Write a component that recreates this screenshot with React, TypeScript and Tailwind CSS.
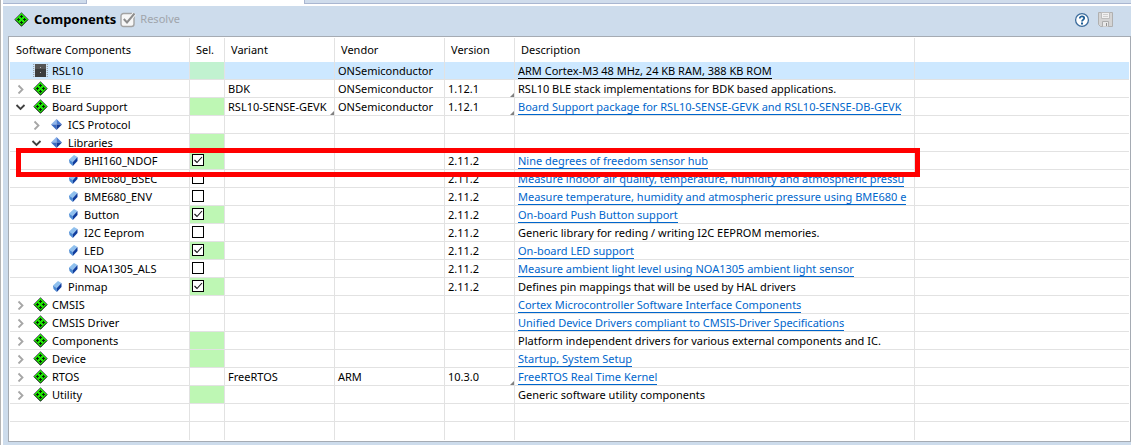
import { useState } from "react";
import type { ReactNode } from "react";

type Kind = "chip" | "pack" | "group" | "leaf";

interface Row {
  name: string;
  kind: Kind;
  level: 0 | 1 | 2;
  expand?: "open" | "closed";
  green?: boolean;
  checked?: boolean;
  variant?: string;
  vendor?: string;
  version?: string;
  moreVariants?: boolean;
  moreVersions?: boolean;
  text?: string;
  link?: boolean;
  selected?: boolean;
}

const rows: Row[] = [
  { name: "RSL10", kind: "chip", level: 0, green: true, vendor: "ONSemiconductor", text: "ARM Cortex-M3 48 MHz, 24 KB RAM, 388 KB ROM", link: true, selected: true },
  { name: "BLE", kind: "pack", level: 0, expand: "closed", variant: "BDK", vendor: "ONSemiconductor", version: "1.12.1", moreVersions: true, text: "RSL10 BLE stack implementations for BDK based applications." },
  { name: "Board Support", kind: "pack", level: 0, expand: "open", green: true, variant: "RSL10-SENSE-GEVK", moreVariants: true, vendor: "ONSemiconductor", version: "1.12.1", moreVersions: true, text: "Board Support package for RSL10-SENSE-GEVK and RSL10-SENSE-DB-GEVK", link: true },
  { name: "ICS Protocol", kind: "group", level: 1, expand: "closed" },
  { name: "Libraries", kind: "group", level: 1, expand: "open", green: true },
  { name: "BHI160_NDOF", kind: "leaf", level: 2, green: true, checked: true, version: "2.11.2", text: "Nine degrees of freedom sensor hub", link: true },
  { name: "BME680_BSEC", kind: "leaf", level: 2, checked: false, version: "2.11.2", text: "Measure indoor air quality, temperature, humidity and atmospheric pressu", link: true },
  { name: "BME680_ENV", kind: "leaf", level: 2, checked: false, version: "2.11.2", text: "Measure temperature, humidity and atmospheric pressure using BME680 e", link: true },
  { name: "Button", kind: "leaf", level: 2, green: true, checked: true, version: "2.11.2", text: "On-board Push Button support", link: true },
  { name: "I2C Eeprom", kind: "leaf", level: 2, checked: false, version: "2.11.2", text: "Generic library for reding / writing I2C EEPROM memories." },
  { name: "LED", kind: "leaf", level: 2, green: true, checked: true, version: "2.11.2", text: "On-board LED support", link: true },
  { name: "NOA1305_ALS", kind: "leaf", level: 2, checked: false, version: "2.11.2", text: "Measure ambient light level using NOA1305 ambient light sensor", link: true },
  { name: "Pinmap", kind: "leaf", level: 1, green: true, checked: true, version: "2.11.2", text: "Defines pin mappings that will be used by HAL drivers" },
  { name: "CMSIS", kind: "pack", level: 0, expand: "closed", text: "Cortex Microcontroller Software Interface Components", link: true },
  { name: "CMSIS Driver", kind: "pack", level: 0, expand: "closed", text: "Unified Device Drivers compliant to CMSIS-Driver Specifications", link: true },
  { name: "Components", kind: "pack", level: 0, expand: "closed", green: true, text: "Platform independent drivers for various external components and IC." },
  { name: "Device", kind: "pack", level: 0, expand: "closed", green: true, text: "Startup, System Setup", link: true },
  { name: "RTOS", kind: "pack", level: 0, expand: "closed", variant: "FreeRTOS", vendor: "ARM", version: "10.3.0", moreVersions: true, text: "FreeRTOS Real Time Kernel", link: true },
  { name: "Utility", kind: "pack", level: 0, expand: "closed", green: true, text: "Generic software utility components" },
];

function PackIcon() {
  return (
    <svg width="15" height="15" viewBox="0 0 15 15" className="shrink-0" aria-hidden="true">
      <path d="M7.5 0.6 14.4 7.5 7.5 14.4 0.6 7.5Z" fill="#1fe600" stroke="#6f6280" strokeWidth="1" />
      <path d="M1.5 8 7.5 14 13.5 8" fill="none" stroke="#1b4a16" strokeWidth="1" />
      <path
        d="M7 3h1v1h1v1H8v1H7V5H6V4h1zM4 6h1v1h1v1H5v1H4V8H3V7h1zM10 6h1v1h1v1h-1v1h-1V8H9V7h1zM7 9h1v1h1v1H8v1H7v-1H6v-1h1z"
        fill="#06240a"
      />
    </svg>
  );
}

function ChipIcon() {
  return (
    <svg width="15" height="15" viewBox="0 0 15 15" className="shrink-0" aria-hidden="true">
      <path d="M0.5 1v13M14.5 1v13" stroke="#9aa3ab" strokeDasharray="1 1" />
      <path d="M1.5 1v13M13.5 1v13" stroke="#c9d3da" strokeDasharray="1 1" />
      <rect x="2" y="1" width="11" height="13" fill="#3c3c3c" />
      <rect x="2" y="1" width="11" height="5" fill="#555" />
      <path d="M7 4h1v1H7zM7 9h1v1H7z" fill="#b5b5b5" />
    </svg>
  );
}

function GroupIcon() {
  return (
    <svg width="11" height="11" viewBox="0 0 11 11" className="shrink-0" aria-hidden="true">
      <path d="M5.5 0 0 5.5h5.5z" fill="#8fb5ea" />
      <path d="M5.5 0 11 5.5H5.5z" fill="#4a7bd0" />
      <path d="M0 5.5 5.5 11V5.5z" fill="#3a6ac2" />
      <path d="M11 5.5 5.5 11V5.5z" fill="#143c96" />
    </svg>
  );
}

function LeafIcon() {
  return (
    <svg width="9" height="11" viewBox="0 0 9 11" className="shrink-0" aria-hidden="true">
      <path d="M5 0 0 4.5 3.5 7 8.5 2z" fill="#8fc0ee" />
      <path d="M0 4.5 3.8 7V11L0.5 8z" fill="#4a8ad4" />
      <path d="M3.8 7 8.5 2V6L3.8 11z" fill="#0f3d9e" />
    </svg>
  );
}

function Chevron({ open }: { open: boolean }) {
  return open ? (
    <svg width="11" height="10" viewBox="0 0 11 10" aria-hidden="true">
      <path d="M1.5 3 5.5 7 9.5 3" fill="none" stroke="#404040" strokeWidth="1.8" />
    </svg>
  ) : (
    <svg width="11" height="10" viewBox="0 0 11 10" aria-hidden="true">
      <path d="M3.5 1.5 7.5 5.5 3.5 9.5" fill="none" stroke="#a6a6a6" strokeWidth="1.8" />
    </svg>
  );
}

const icons: Record<Kind, ReactNode> = {
  chip: <ChipIcon />,
  pack: <PackIcon />,
  group: <GroupIcon />,
  leaf: <LeafIcon />,
};

const indents = ["pl-[5px]", "pl-[21px]", "pl-[37px]"];
const line = "border-r border-b border-[#e2e2e2]";

function More() {
  return (
    <svg width="4" height="4" viewBox="0 0 4 4" className="absolute right-0 bottom-0" aria-hidden="true">
      <path d="M4 0V4H0z" fill="#808080" />
    </svg>
  );
}

function Tick({ label, initial }: { label: string; initial: boolean }) {
  const [on, setOn] = useState(initial);
  return (
    <span className="mb-px ml-[2px] grid size-3 border border-black bg-white">
      <input
        type="checkbox"
        aria-label={label}
        checked={on}
        onChange={() => setOn(!on)}
        className="col-start-1 row-start-1 size-[10px] appearance-none"
      />
      {on && (
        <svg viewBox="0 0 10 10" className="pointer-events-none col-start-1 row-start-1 size-[10px]" aria-hidden="true">
          <path d="M1.5 5 4 7.5 9 2" fill="none" stroke="#111" strokeWidth="1.1" />
        </svg>
      )}
    </span>
  );
}

function ComponentRow({ row }: { row: Row }) {
  const iconBox = row.kind === "leaf" ? "w-[17px]" : "w-[15px]";
  const gap = row.kind === "leaf" ? "ml-[2px]" : "ml-1";
  return (
    <tr className={row.selected ? "h-[18px] bg-[#cde8ff]" : "h-[18px]"}>
      <td className={`${line} p-0`}>
        <div className={`flex h-[17px] items-center ${indents[row.level]}`}>
          <span className="mt-px w-[18px]">
            {row.expand && (
              <button type="button" aria-label={`Toggle ${row.name}`} className="block">
                <Chevron open={row.expand === "open"} />
              </button>
            )}
          </span>
          <span className={`flex shrink-0 justify-center ${iconBox}`}>{icons[row.kind]}</span>
          <span className={gap}>{row.name}</span>
        </div>
      </td>
      <td className={`${line} p-0 ${row.green ? (row.selected ? "bg-[#c1f2d0]" : "bg-[#bef7b4]") : ""}`}>
        {row.checked !== undefined && <Tick label={row.name} initial={row.checked} />}
      </td>
      <td className={`${line} relative py-0 pr-0 pl-[3px]`}>
        {row.variant}
        {row.moreVariants && <More />}
      </td>
      <td className={`${line} py-0 pr-0 pl-[3px]`}>{row.vendor}</td>
      <td className={`${line} relative py-0 pr-0 pl-[3px]`}>
        {row.version}
        {row.moreVersions && <More />}
      </td>
      <td className={`${line} py-0 pr-0 pl-[3px]`}>
        {row.link ? (
          <a
            href="#"
            className={`block h-4 w-fit border-b leading-[15px] ${row.selected ? "border-black text-black" : "border-[#0066cc] text-[#0066cc]"}`}
          >
            {row.text}
          </a>
        ) : (
          row.text
        )}
      </td>
      <td className="border-b border-[#e2e2e2] p-0" />
    </tr>
  );
}

export default function App() {
  const heads = ["Sel.", "Variant", "Vendor", "Version", "Description"];
  return (
    <div className="flex h-screen min-h-[445px] flex-col overflow-hidden border-l border-[#b4b4b4] bg-white font-['Noto_Sans',sans-serif] text-[11px] text-black">
      <div className="flex h-1 shrink-0 pl-[2px]">
        <div className="w-[84px] border-r border-b border-[#a9b6d0] bg-[#cfdcec]" />
        <div className="w-[217px]" />
        <div className="flex-1 border-b border-l border-[#a9b6d0] bg-[#cfdcec]" />
      </div>

      <div className="mt-[2px] ml-[2px] flex flex-1 flex-col border-b border-[#a9a9b4] bg-[#cddcec] pb-[3px]">
        <header className="flex h-[30px] shrink-0 items-center pr-[18px] pl-[11px] pb-[3px]">
          <PackIcon />
          <h1 className="ml-[5px] text-[13px] font-bold">Components</h1>
          <button type="button" disabled className="ml-1 flex items-center gap-1 text-[#a0a5ab]">
            <svg width="16" height="16" viewBox="0 0 16 16" aria-hidden="true">
              <rect x="1" y="1.5" width="13" height="13" rx="2.5" fill="#f7f7f7" stroke="#a3a3a3" strokeWidth="1.4" />
              <path d="M4 7.5 7 10.5 14.5 1.5" fill="none" stroke="#f7f7f7" strokeWidth="4" />
              <path d="M3.8 7 7 10.5 14.5 1.5" fill="none" stroke="#8d8d8d" strokeWidth="2" />
            </svg>
            Resolve
          </button>
          <div className="ml-auto flex items-center gap-2">
            <button type="button" aria-label="Help">
              <svg width="16" height="16" viewBox="0 0 16 16" className="block" aria-hidden="true">
                <circle cx="8" cy="8" r="6.4" fill="#fff" stroke="#3c6c9c" strokeWidth="1.3" />
                <path d="M5.8 6.4C5.8 3.7 10.2 3.9 10.2 6.3 10.2 7.8 8 7.7 8 9.6" fill="none" stroke="#1f5f97" strokeWidth="1.8" />
                <path d="M7 10.6h2v1.8H7z" fill="#1f5f97" />
              </svg>
            </button>
            <button type="button" aria-label="Save" disabled>
              <svg width="15" height="15" viewBox="0 0 15 15" className="block" aria-hidden="true">
                <path d="M0.5 0.5h14v14h-12l-2-2z" fill="#d4d4d4" stroke="#b0b0b0" />
                <path d="M3.5 0.5h8v6h-8z" fill="#f1f1f1" stroke="#bdbdbd" />
                <path d="M5 2.5h5M5 4.5h5" stroke="#cfcfcf" />
                <path d="M4.5 14.5v-5h6v5" fill="#e9e9e9" stroke="#adadad" />
                <path d="M8.5 11v3" stroke="#8f8f8f" />
              </svg>
            </button>
          </div>
        </header>

        <main className="relative ml-[5px] flex flex-1 flex-col border border-[#a5abb3] bg-white px-px pt-px pb-px">
          <table className="w-full flex-1 table-fixed border-separate border-spacing-0 text-left leading-[17px] whitespace-nowrap">
            <colgroup>
              <col className="w-[180px]" />
              <col className="w-[35px]" />
              <col className="w-[110px]" />
              <col className="w-[110px]" />
              <col className="w-[70px]" />
              <col className="w-[400px]" />
              <col />
            </colgroup>
            <thead>
              <tr className="h-6">
                <th className="border-r border-[#e2e2e2] pt-0 pr-0 pb-[2px] pl-[6px] font-normal">Software Components</th>
                {heads.map((h) => (
                  <th key={h} className="border-r border-[#e2e2e2] pt-0 pr-0 pb-[2px] pl-[6px] font-normal">
                    {h}
                  </th>
                ))}
                <th className="p-0" />
              </tr>
            </thead>
            <tbody>
              {rows.map((row) => (
                <ComponentRow key={row.name} row={row} />
              ))}
              {[0, 1].map((n) => (
                <tr key={n} className="h-[18px]">
                  {[0, 1, 2, 3, 4, 5].map((c) => (
                    <td key={c} className={n === 0 ? `${line} p-0` : "border-r border-[#e2e2e2] p-0"} />
                  ))}
                  <td className={n === 0 ? "border-b border-[#e2e2e2] p-0" : "p-0"} />
                </tr>
              ))}
            </tbody>
          </table>
          <div className="pointer-events-none absolute top-[111px] left-[7px] h-[29px] w-[904px] border-[5px] border-[#ff0000]" />
        </main>
      </div>
    </div>
  );
}
